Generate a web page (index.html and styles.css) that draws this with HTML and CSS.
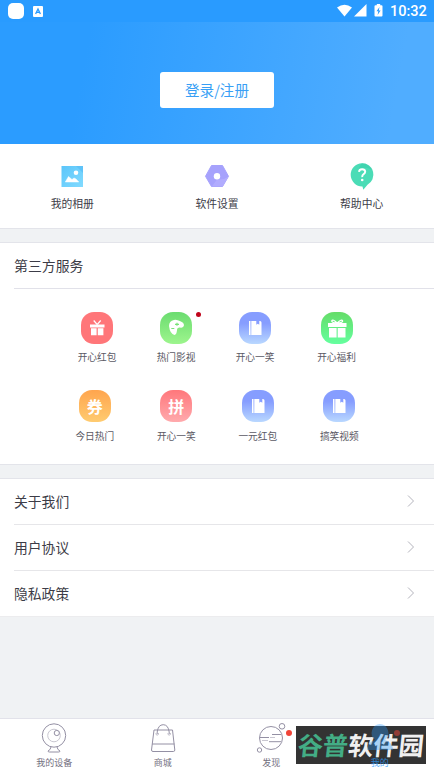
FILE: index.html
```html
<!DOCTYPE html>
<html lang="zh-CN">
<head>
<meta charset="utf-8">
<title>我的</title>
<link rel="stylesheet" href="styles.css">
</head>
<body>
<svg class="defs" width="0" height="0" aria-hidden="true">
  <defs>
    <symbol id="book" viewBox="0 0 32 32"><path fill="#fff" d="M10 9h1.500v14H10zM12.300 9h5v3.800l1.500-1 1.500 1V9H21a1.500 1.500 0 0 1 1.500 1.500V23H12.300z"/></symbol>
    <symbol id="chevron" viewBox="0 0 8 14"><path d="M1 1.500 6.500 7 1 12.500" fill="none" stroke="#b4b4bd" stroke-width="1"/></symbol>
  </defs>
</svg>
<div class="screen">
  <div class="status">
    <span class="app-dot"></span>
    <svg class="app-a" width="10" height="11" viewBox="0 0 10 11"><rect width="10" height="11" rx="1" fill="#fff"/><path d="m2.600 8 2.400-5 2.400 5M3.500 6.300h3" fill="none" stroke="#299bff" stroke-width="1.300"/></svg>
    <svg class="signals" width="48" height="16" viewBox="0 0 48 16"><g fill="#fff"><path d="M0 4.500Q7.500-1 15 4.500L7.500 13.500z"/><path d="M29.500 1v12.500H17z"/><path d="M39.800 1h3.400v1.300h1.300q1 0 1 1v9.200q0 1-1 1h-6q-1 0-1-1V3.300q0-1 1-1h1.300z"/></g><path d="m42.500 4-3 4.300h1.800l-.7 3.700 3-4.600h-1.800z" fill="#299bff"/></svg>
    <span class="clock">10:32</span>
  </div>
  <header class="hero"><a class="login">登录/注册</a></header>
  <nav class="quick">
    <a><svg width="32" height="32" viewBox="0 0 32 32"><defs><linearGradient id="sky" x2="1" y2="1"><stop stop-color="#5bc5fa"/><stop offset="1" stop-color="#82dbff"/></linearGradient></defs><rect x="5.500" y="6" width="21.500" height="21" fill="url(#sky)"/><path d="M20 6h7v7z" fill="#58bef6" opacity=".7"/><circle cx="20" cy="12.800" r="2.300" fill="#fff"/><path d="M9.300 22 12.500 16.500l3.500 3 2-1.500 2 1 2.800 3z" fill="#fff" stroke="#fff" stroke-width=".5"/></svg>我的相册</a>
    <a><svg width="32" height="32" viewBox="0 0 32 32"><path d="M10.500 5.500h11l6 10.800-6 10.200h-11l-6-10.200z" fill="#a6a2fc" stroke="#a6a2fc" stroke-linejoin="round"/><path d="M16 19.500q8 .5 11.800-3.500l-6 10.500h-11z" fill="#b6b1ff" opacity=".7"/><circle cx="16" cy="16.300" r="3.200" fill="#fff"/></svg>软件设置</a>
    <a><svg width="32" height="32" viewBox="0 0 32 32"><path d="M16 3.300a11.400 11.400 0 0 1 5.500 21.400l-4.200 5-.8-3.300A11.500 11.500 0 1 1 16 3.300z" fill="#4bdcb6"/><path d="M16 3.300q8 0 11.300 8Q22 5.500 13 9q0-3 3-5.700z" fill="#38ceaa" opacity=".6"/><path d="M13 11.800q.2-2.500 3.100-2.500t3.100 2.400q0 1.400-1.600 2.400t-1.400 3" fill="none" stroke="#fff" stroke-width="1.900"/><circle cx="16.200" cy="20" r="1.300" fill="#fff"/></svg>帮助中心</a>
  </nav>
  <div class="gap"></div>
  <section class="services">
    <h2>第三方服务</h2>
    <div class="grid first">
      <a><span class="tile red"><svg viewBox="0 0 32 32"><path fill="#fff" d="M9 12.500h14.500v3H9zM10 16.300h5.600v7H10zM16.800 16.300h5.600v7h-5.600z"/><path d="m16.200 12.500-3.500-4M16.200 12.500l3.500-4" stroke="#fff" stroke-width="1.200"/></svg></span>开心红包</a>
      <a><span class="tile green"><svg viewBox="0 0 32 32"><path fill="#fff" d="M9 14Q9 9 14 8q1.500-.5 4.500.4Q24 10 24 13.300q-.5 3-4 2.200-3-.2-3 2.700-.5 4.400-2.500 4.800Q10 22 9 14z"/><path d="M15 12.300h4M17 10.800v3M11.300 16.500h3" stroke="#79e279" stroke-width="1.200"/></svg><i class="badge"></i></span>热门影视</a>
      <a><span class="tile blue"><svg><use href="#book"/></svg></span>开心一笑</a>
      <a><span class="tile mint"><svg viewBox="0 0 32 32"><path fill="#fff" d="M7 11h18.500v4H7zM8 16h7.600v9.500H8zM16.700 16h7.800v9.500h-7.800z"/><path d="M16.200 11q-5 0-5.500-2 1-2.500 5.500 2 4.500-4.500 5.500-2-.5 2-5.500 2z" fill="none" stroke="#fff" stroke-width="1.200"/></svg></span>开心福利</a>
    </div>
    <div class="grid second">
      <a><span class="tile orange">券</span>今日热门</a>
      <a><span class="tile pink">拼</span>开心一笑</a>
      <a><span class="tile blue"><svg><use href="#book"/></svg></span>一元红包</a>
      <a><span class="tile blue"><svg><use href="#book"/></svg></span>搞笑视频</a>
    </div>
  </section>
  <div class="gap"></div>
  <section class="menu">
    <a>关于我们<svg width="8" height="14"><use href="#chevron"/></svg></a>
    <a>用户协议<svg width="8" height="14"><use href="#chevron"/></svg></a>
    <a>隐私政策<svg width="8" height="14"><use href="#chevron"/></svg></a>
  </section>
  <footer class="tabs">
    <a><svg width="32" height="34" viewBox="0 0 32 34" fill="none" stroke="#9490a4"><circle cx="16" cy="16.500" r="11.700"/><circle cx="16" cy="16.500" r="6.300" stroke="#c9c7d1"/><circle cx="18.800" cy="14" r="2.600" fill="#fff"/><path d="M13 28q-.5 3-3 4 0 1 1.300 1h9.400q1.300 0 1.300-1-2.500-1-3-4"/></svg>我的设备</a>
    <a><svg width="32" height="34" viewBox="0 0 32 34" fill="none" stroke="#9490a4"><path d="M7 11h18.500l2.300 20q0 1.500-1.500 1.500H6q-1.500 0-1.500-1.500zM5 25h22.500"/><path d="M10.200 15v-2q1-7.300 6-7.300t6 7.300v2"/><path d="M9 14v1.500q1.200 1.300 2.400 0V14M21 14v1.500q1.200 1.300 2.400 0V14" stroke="#c0bdca"/></svg>商城</a>
    <a><svg width="32" height="34" viewBox="0 0 32 34" fill="none" stroke="#9490a4"><circle cx="16" cy="19" r="11.500"/><circle cx="27" cy="7.300" r="2.800" fill="#fff"/><circle cx="4.500" cy="31" r="2.200" fill="#fff"/><path d="M5 18.500h9M17 15.500h9M14 22.700h12"/><path d="M7 21.500h6M15 18.500h5" stroke="#c9c7d1"/></svg><i class="dot"></i>发现</a>
    <a class="active"><svg width="32" height="34" viewBox="0 0 32 34"><path d="M16 5a9 9 0 0 1 5 16q7 2 8 9v1H3v-1q1-7 8-9a9 9 0 0 1 5-16z" fill="#299bff"/></svg><i class="dot"></i><span class="label">我的</span></a>
  </footer>
  <div class="mark"><div class="word"><span class="g">谷普</span><span>软件园</span></div></div>
</div>
</body>
</html>
```
FILE: styles.css
```css
* { box-sizing: border-box; }
body { margin: 0; font-family: "Noto Sans CJK SC", sans-serif; color: #3c3c47; }
.defs { display: block; height: 0; }
.screen { position: relative; width: 434px; height: 772px; background: #f0f2f4; display: flex; flex-direction: column; overflow: hidden; }
.status { height: 22px; flex: none; background: #299bff; display: flex; align-items: center; padding: 0 7px 0 8px; color: #fff; }
.app-dot { width: 16px; height: 16px; border-radius: 5px; background: #fff; }
.app-a { margin-left: 9px; }
.signals { margin-left: auto; }
.clock { font: 500 14.5px/22px Roboto, sans-serif; margin-left: 5px; width: 37px; padding-top: 1px; white-space: nowrap; }
.hero { height: 122px; flex: none; background: linear-gradient(100deg, #2b9cff 20%, #50adff 90%); display: flex; justify-content: center; padding-top: 50px; }
.login { width: 114px; height: 36px; border-radius: 3px; background: #fff; color: #389ff5; font-size: 14.6px; line-height: 36px; text-align: center; }
.quick { height: 84px; flex: none; background: #fff; display: grid; grid-template-columns: repeat(3, 1fr); padding-top: 16px; }
.quick a { display: flex; flex-direction: column; align-items: center; font-size: 10.8px; line-height: 22px; }
.gap { height: 15px; flex: none; border: solid #e3e4ea; border-width: 1px 0; }
.services { height: 221px; flex: none; background: #fff; }
h2 { margin: 0 0 0 14px; height: 46px; border-bottom: 1px solid #e1e1e9; font-size: 13.9px; font-weight: 400; line-height: 45px; }
.grid { display: grid; height: 78px; }
.first { grid-template-columns: 79px 79px 79px 84px; margin: 23px 0 0 57.5px; }
.second { grid-template-columns: repeat(4, 81.5px); margin-left: 54px; }
.grid a { display: flex; flex-direction: column; align-items: center; font-size: 9.7px; line-height: 27px; color: #5b5965; }
.second a { line-height: 29px; }
.tile { position: relative; width: 32px; height: 32px; flex: none; border-radius: 13px; color: #fff; font-size: 16px; font-weight: 700; line-height: 32px; text-align: center; }
.tile svg { display: block; width: 32px; height: 32px; }
.red { background: #ff7679; }
.green { background: linear-gradient(#6bdc70, #9df58d); }
.blue { background: linear-gradient(#869dff 35%, #b9d8ff); }
.mint { background: linear-gradient(#65dc68, #65ff9f); }
.orange { background: linear-gradient(#ffa54e, #ffcb70); }
.pink { background: linear-gradient(#ff777b, #ffaaad); }
.badge { position: absolute; left: 36px; top: 0; width: 5px; height: 5px; border-radius: 50%; background: #c0051b; }
.menu { height: 138px; flex: none; background: #fff; border-bottom: 1px solid #ececee; }
.menu a { display: flex; align-items: center; justify-content: space-between; height: 46px; margin-left: 14px; padding: 0 19px 1px 0; border-bottom: 1px solid #e6e6e9; font-size: 13.8px; line-height: 44px; }
.menu a:last-child { border-bottom: 0; height: 45px; }
.tabs { height: 54px; flex: none; margin-top: auto; background: #fff; border-top: 1px solid #e2e2ea; display: grid; grid-template-columns: repeat(4, 1fr); }
.tabs a { position: relative; display: flex; flex-direction: column; align-items: center; font-size: 9px; line-height: 19px; color: #737080; }
.tabs svg { flex: none; }
.tabs .active { position: static; color: #299bff; }
.active svg { position: relative; z-index: 2; opacity: .35; }
.active .dot { left: 394px; top: 730px; z-index: 2; opacity: .5; }
.label { position: relative; z-index: 2; opacity: .75; }
.dot { position: absolute; left: 69px; top: 11px; width: 6px; height: 6px; border-radius: 50%; background: #f04438; }
.mark { position: absolute; left: 296px; top: 726px; width: 130px; height: 38px; background: #333; color: #f0f0f0; font-size: 25.200px; font-weight: 700; line-height: 37px; white-space: nowrap; padding-left: 2px; }
.word { transform: skewX(-6deg); }
.g { color: #43ad85; }
```
